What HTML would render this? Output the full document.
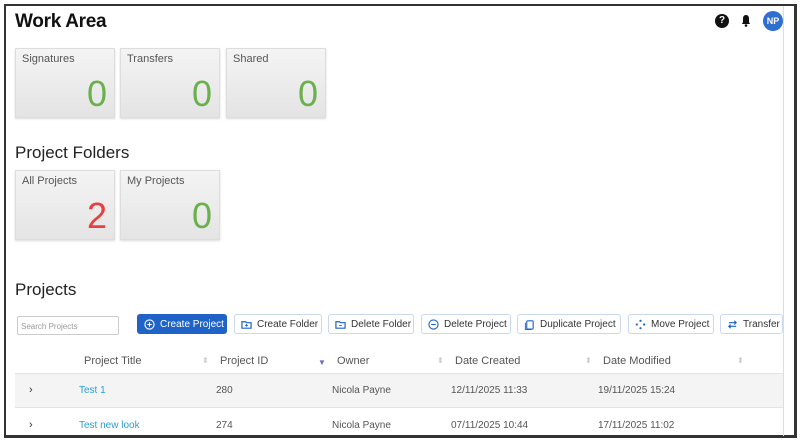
<!DOCTYPE html>
<html><head><style>
*{box-sizing:border-box;margin:0;padding:0}
body{width:800px;height:442px;background:#fff;font-family:"Liberation Sans",sans-serif;position:relative;overflow:hidden}
.frame{position:absolute;left:4px;top:4px;width:793px;height:434px;border:2px solid #333;border-right-width:3px;border-bottom-width:3px}
.rline{position:absolute;left:783px;top:6px;width:1px;height:430px;background:#ddd}
.a{position:absolute}
h1{position:absolute;left:15px;top:11px;font-size:19px;font-weight:bold;color:#111;letter-spacing:-0.3px}
.tile{position:absolute;width:100px;height:70px;background:linear-gradient(#f4f4f4,#e4e4e4);border:1px solid #ddd;box-shadow:0 1px 2px rgba(0,0,0,.15)}
.tile .l{position:absolute;left:6px;top:4px;font-size:11px;color:#555}
.tile .n{position:absolute;right:7px;bottom:2px;font-size:36px;color:#6ab04c;font-weight:normal}
h2{position:absolute;left:15px;font-size:17px;font-weight:normal;color:#222}
.btn{position:absolute;top:314px;height:20px;border:1px solid #c9d8ec;border-radius:3px;font-size:10px;line-height:18px;color:#333;display:flex;align-items:center;padding-left:6px;padding-top:1px;gap:5px;background:#fff}
.btn svg{width:11px;height:11px}
.th{position:absolute;top:355px;font-size:11px;color:#555}
.td{position:absolute;font-size:10px;color:#555}
.srt{position:absolute;top:356px;font-size:8px;color:#ccc}
</style></head><body>
<div class="frame"></div>
<div class="rline"></div>
<h1>Work Area</h1>
<div class="a" style="left:715px;top:14px;width:14px;height:14px;border-radius:50%;background:#111;color:#fff;font-size:10px;font-weight:bold;text-align:center;line-height:14px">?</div>
<svg class="a" style="left:740px;top:14px" width="12" height="14" viewBox="0 0 12 14"><path d="M6 1C3.5 1 3 3 3 5v3L2 10h8L9 8V5C9 3 8.5 1 6 1z" fill="#111"/><circle cx="6" cy="11.5" r="1.3" fill="#111"/></svg>
<div class="a" style="left:763px;top:11px;width:20px;height:20px;border-radius:50%;background:#2f6fd0;color:#fff;font-size:9px;font-weight:bold;text-align:center;line-height:20px">NP</div>

<div class="tile" style="left:15px;top:48px"><div class="l">Signatures</div><div class="n">0</div></div>
<div class="tile" style="left:120px;top:48px"><div class="l">Transfers</div><div class="n">0</div></div>
<div class="tile" style="left:226px;top:48px"><div class="l">Shared</div><div class="n">0</div></div>

<h2 style="top:143px">Project Folders</h2>
<div class="tile" style="left:15px;top:170px"><div class="l">All Projects</div><div class="n" style="color:#e84040">2</div></div>
<div class="tile" style="left:120px;top:170px"><div class="l">My Projects</div><div class="n">0</div></div>

<h2 style="top:280px">Projects</h2>
<div class="a" style="left:17px;top:316px;width:102px;height:19px;border:1px solid #ccc;border-radius:2px;font-size:8px;color:#999;padding:5px 3px">Search Projects</div>

<div class="btn" style="left:137px;width:90px;background:#1f63c6;border-color:#1f63c6;color:#fff"><svg viewBox="0 0 12 12"><circle cx="6" cy="6" r="5" fill="none" stroke="#fff" stroke-width="1.2"/><path d="M6 3.5v5M3.5 6h5" stroke="#fff" stroke-width="1.2"/></svg>Create Project</div>
<div class="btn" style="left:234px;width:88px"><svg viewBox="0 0 12 12"><path d="M1 3h4l1 1h5v6H1z" fill="none" stroke="#1f63c6" stroke-width="1.3"/><path d="M6 5.5v3M4.5 7h3" stroke="#1f63c6"/></svg>Create Folder</div>
<div class="btn" style="left:328px;width:86px"><svg viewBox="0 0 12 12"><path d="M1 3h4l1 1h5v6H1z" fill="none" stroke="#1f63c6" stroke-width="1.3"/><path d="M4.5 7h3" stroke="#1f63c6"/></svg>Delete Folder</div>
<div class="btn" style="left:421px;width:90px"><svg viewBox="0 0 12 12"><circle cx="6" cy="6" r="5" fill="none" stroke="#1f63c6" stroke-width="1.2"/><path d="M3.5 6h5" stroke="#1f63c6" stroke-width="1.2"/></svg>Delete Project</div>
<div class="btn" style="left:517px;width:104px"><svg viewBox="0 0 12 12"><rect x="3" y="2" width="7" height="9" rx="1" fill="none" stroke="#1f63c6" stroke-width="1.2"/><path d="M1.5 4v7.5H8" fill="none" stroke="#1f63c6"/></svg>Duplicate Project</div>
<div class="btn" style="left:628px;width:86px"><svg viewBox="0 0 12 12" fill="#1f63c6"><circle cx="6" cy="2" r="1.2"/><circle cx="6" cy="10" r="1.2"/><circle cx="2" cy="6" r="1.2"/><circle cx="10" cy="6" r="1.2"/></svg>Move Project</div>
<div class="btn" style="left:720px;width:63px"><svg viewBox="0 0 12 12"><path d="M2 4h8M8 2l2 2-2 2M10 8H2M4 6l-2 2 2 2" fill="none" stroke="#1f63c6" stroke-width="1.3"/></svg>Transfer</div>

<div class="th" style="left:84px">Project Title</div><div class="srt" style="left:202px">⬍</div>
<div class="th" style="left:220px">Project ID</div><div class="srt" style="left:318px;color:#6a6ad8;top:358px">▼</div>
<div class="th" style="left:337px">Owner</div><div class="srt" style="left:437px">⬍</div>
<div class="th" style="left:455px">Date Created</div><div class="srt" style="left:585px">⬍</div>
<div class="th" style="left:603px">Date Modified</div><div class="srt" style="left:737px">⬍</div>
<div class="a" style="left:15px;top:373px;width:768px;height:1px;background:#e3e3e3"></div>
<div class="a" style="left:15px;top:374px;width:768px;height:34px;background:#f4f4f4;border-bottom:1px solid #e3e3e3"></div>

<div class="td" style="left:29px;top:384px;color:#333;font-size:11px">›</div>
<div class="td" style="left:79px;top:385px;color:#2a9fd6">Test 1</div>
<div class="td" style="left:216px;top:385px">280</div>
<div class="td" style="left:332px;top:385px">Nicola Payne</div>
<div class="td" style="left:451px;top:385px">12/11/2025 11:33</div>
<div class="td" style="left:598px;top:385px">19/11/2025 15:24</div>

<div class="td" style="left:29px;top:419px;color:#333;font-size:11px">›</div>
<div class="td" style="left:79px;top:420px;color:#2a9fd6">Test new look</div>
<div class="td" style="left:216px;top:420px">274</div>
<div class="td" style="left:332px;top:420px">Nicola Payne</div>
<div class="td" style="left:451px;top:420px">07/11/2025 10:44</div>
<div class="td" style="left:598px;top:420px">17/11/2025 11:02</div>
</body></html>
